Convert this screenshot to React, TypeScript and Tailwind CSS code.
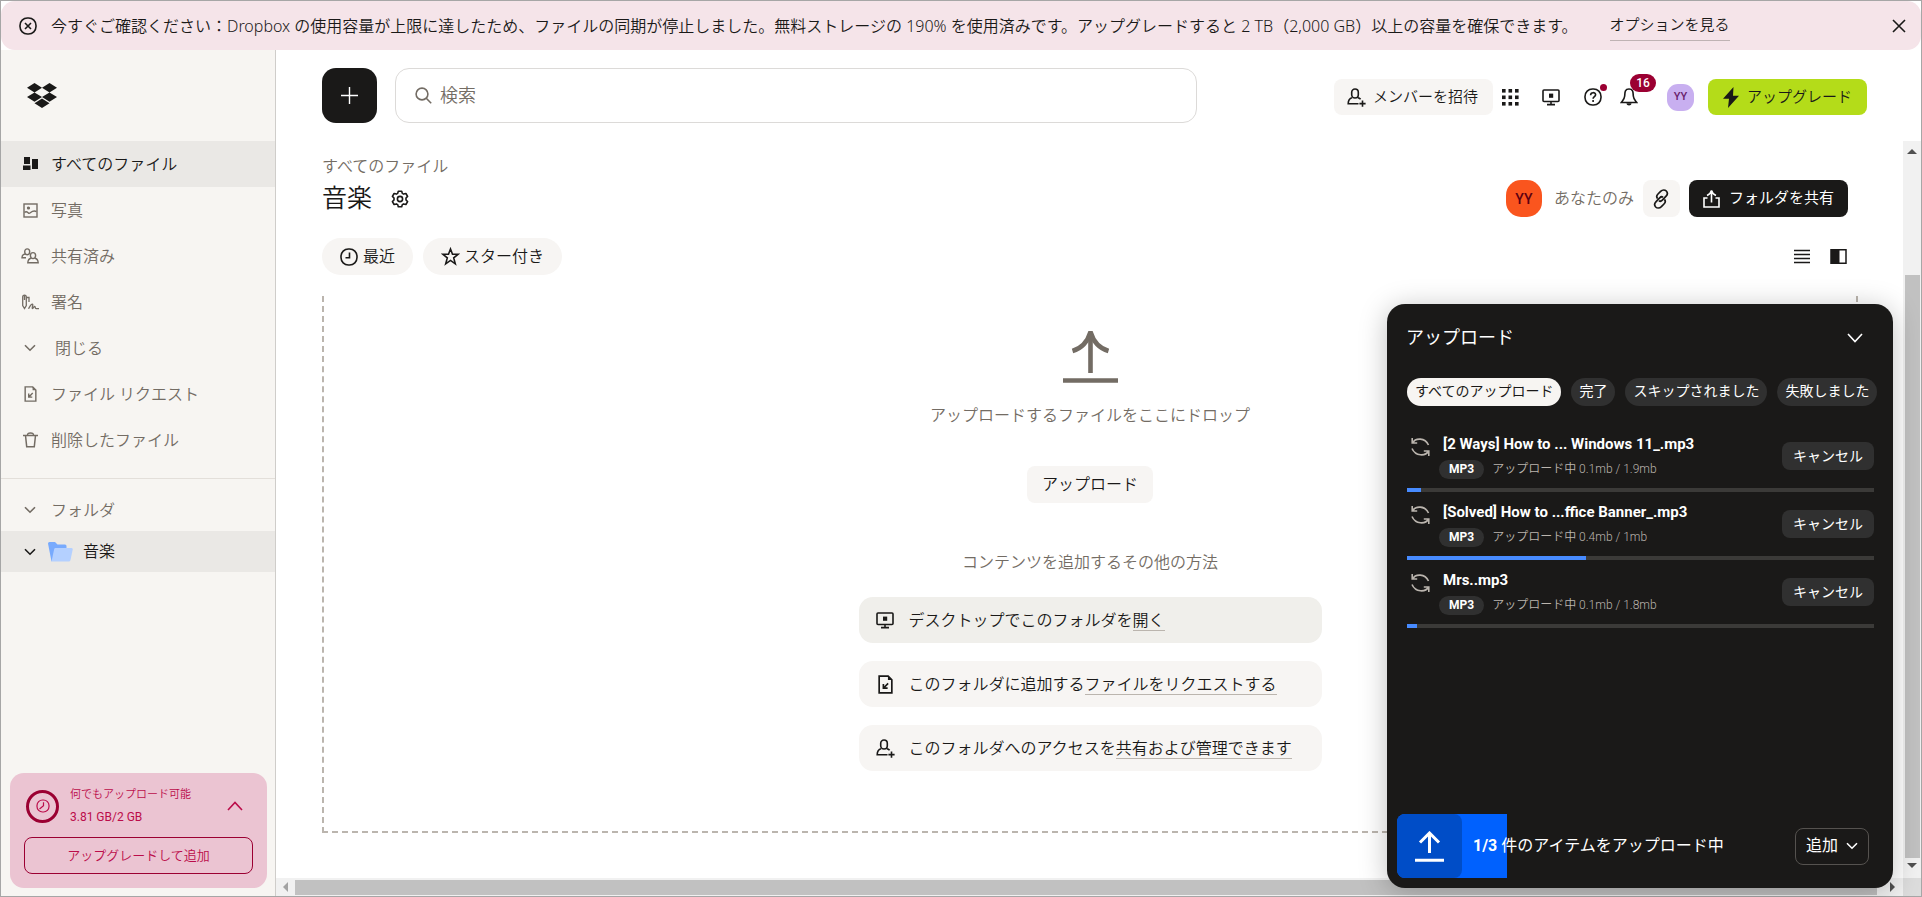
import React, { type ReactNode } from 'react';

type IconProps = { className?: string };

function Svg({ className = '', box, width = 1.6, children }: IconProps & { box: string; width?: number; children: ReactNode }) {
  return (
    <svg viewBox={box} className={`shrink-0 ${className}`} fill="none" stroke="currentColor" strokeWidth={width} aria-hidden="true">
      {children}
    </svg>
  );
}

const DropboxLogo = () => (
  <svg viewBox="0 0 30 25" className="h-[25px] w-[30px]" fill="currentColor" aria-hidden="true">
    <path d="M7.5 0 15 4.7 7.5 9.4 0 4.7ZM22.5 0 30 4.7 22.5 9.4 15 4.7ZM7.5 9.4 15 14.1 7.5 18.8 0 14.1ZM22.5 9.4 30 14.1 22.5 18.8 15 14.1ZM15 15.6 22.5 20.3 15 25 7.5 20.3Z" />
  </svg>
);

const CircleX = ({ className }: IconProps) => (
  <Svg box="0 0 18 18" className={className}>
    <rect x="1" y="1" width="16" height="16" rx="7.4" />
    <path d="m6 6 6 6M12 6l-6 6" />
  </Svg>
);
const Close = ({ className }: IconProps) => (
  <Svg box="0 0 14 14" className={className}>
    <path d="m1 1 12 12M13 1 1 13" />
  </Svg>
);
const Chevron = ({ className }: IconProps) => (
  <Svg box="0 0 12 8" className={className}>
    <path d="m1 1.2 5 5 5-5" />
  </Svg>
);
const AllFiles = ({ className }: IconProps) => (
  <svg viewBox="0 0 15 14" className={`shrink-0 ${className}`} fill="currentColor" aria-hidden="true">
    <path d="M1 0h6v7H1zM0 8.5h7.5V13H0zM9 2h6v10H9z" />
  </svg>
);
const Photo = ({ className }: IconProps) => (
  <Svg box="0 0 15 15" width={1.4} className={className}>
    <rect x="1" y="1" width="13" height="13" />
    <path d="M1.5 9.5c2-2 3-.2 4.2.8C7.5 11 8.5 6.5 13.5 8.5" />
    <circle cx="5.5" cy="5" r=".9" fill="currentColor" />
  </Svg>
);
const Shared = ({ className }: IconProps) => (
  <Svg box="0 0 18 16" width={1.4} className={className}>
    <ellipse cx="6.2" cy="3.8" rx="2.5" ry="2.9" />
    <path d="M5 9.8H1c0-2.5 1-3.7 3.5-3.8" />
    <ellipse cx="12" cy="7.6" rx="2.6" ry="3" />
    <path d="M10 10.2c-2 .3-3 1.800-3.200 4.600h10.400c-.2-2.800-1.200-4.300-3.200-4.600" />
  </Svg>
);
const Signature = ({ className }: IconProps) => (
  <Svg box="0 0 18 16" width={1.3} className={className}>
    <path d="M1.7 3c0-2.6 3.6-2.6 3.6 0v8.5l-1.8 3-1.8-3zM3.5 1v5M5.5 3.5H8v4.500" />
    <path d="M7.500 14.800c1-1.800 2.500-4.800 4-4.600 1 .2-1 4.300 0 4.400 1 0 1.200-2.300 2.200-2.200 1 .1 0 2.200 1.400 2.200H18" />
  </Svg>
);
const FileRequest = ({ className }: IconProps) => (
  <Svg box="0 0 14 18" className={className}>
    <path d="M1 1h8.5L13 4.5V17H1z" />
    <path d="M9.300.8v4h3.900z" fill="currentColor" stroke="none" />
    <path d="m9.500 8-4.300 4.300M5 8.500v4h4" />
  </Svg>
);
const Trash = ({ className }: IconProps) => (
  <Svg box="0 0 15 16" width={1.5} className={className}>
    <path d="M0 3.5h15M4.500 3.500C4.500 1.500 5 1 7.500 1s3 .5 3 2.500M2.500 3.500l1.200 11.200h7.600l1.200-11.200" />
  </Svg>
);
const Folder = () => (
  <svg viewBox="0 0 25 20" className="h-5 w-[25px] shrink-0" aria-hidden="true">
    <path d="M0 1.500Q0 0 1.500 0H7l2.500 2.500H17q1.500 0 1.500 1.500v4L3.500 19.500z" fill="#78aafd" />
    <path d="M7.500 6h16q1.500 0 1.200 1.500L22.500 18q-.4 1.500-1.800 1.500H3.500L6.200 7q.3-1 1.300-1z" fill="#b4d0ff" />
  </svg>
);
const Search = ({ className }: IconProps) => (
  <Svg box="0 0 17 17" className={className}>
    <circle cx="7" cy="7" r="5.9" />
    <path d="m11 11 5.200 5.200" />
  </Svg>
);
const PersonAdd = ({ className }: IconProps) => (
  <Svg box="0 0 19 19" className={className}>
    <path d="M11.500 15.700H1.200c0-3.400 1-5.200 4-5.900M10.800 9.800c1.200.2 2.200.8 2.800 1.500" />
    <rect x="4.700" y="1" width="6.600" height="9" rx="3.300" />
    <path d="M15.500 12.500v6.200M12.400 15.600h6.200" />
  </Svg>
);
const Grid = ({ className }: IconProps) => (
  <svg viewBox="0 0 17 17" className={`shrink-0 ${className}`} fill="currentColor" aria-hidden="true">
    {[0, 6.5, 13].map((y) => [0, 6.5, 13].map((x) => <rect key={`${x}-${y}`} x={x} y={y} width="3.6" height="3.6" />))}
  </svg>
);
const Monitor = ({ className }: IconProps) => (
  <Svg box="0 0 18 17" className={className}>
    <rect x="1" y="1" width="16" height="11.5" rx="1" />
    <path d="M9 12.500v3M5 15.600h8" />
    <rect x="7" y="4.600" width="4.200" height="4.200" fill="currentColor" stroke="none" />
  </Svg>
);
const Help = ({ className }: IconProps) => (
  <Svg box="0 0 18 18" className={className}>
    <rect x="1" y="1" width="16" height="16" rx="7.4" />
    <path d="M6.600 7.200c0-3.400 5-3.200 5-.4 0 1.800-2.500 1.900-2.500 4" />
    <path d="M9.100 12v1.900" />
  </Svg>
);
const Bell = ({ className }: IconProps) => (
  <Svg box="0 0 18 18" className={className}>
    <path d="M9 1C4.800 1 4.900 4.500 4.700 8c-.2 3-1.900 4.500-3.400 6.500h15.400c-1.500-2-3.200-3.500-3.400-6.500C13.100 4.500 13.200 1 9 1z" />
    <path d="M6.500 15.200h5c-.2 3-4.800 3-5 0z" fill="currentColor" stroke="none" />
  </Svg>
);
const Bolt = ({ className }: IconProps) => (
  <svg viewBox="0 0 16 21" className={`shrink-0 ${className}`} fill="currentColor" aria-hidden="true">
    <path d="M10.500 0 0 11.800h6L5 21l11-12.300h-6z" />
  </svg>
);
const Gear = ({ className }: IconProps) => (
  <Svg box="0 0 18 18" className={className}>
    <path d="M7.300 1.200h3.400l.6 2.200 1.300.7 2.300-.6 1.700 2.900-1.600 1.600v2l1.600 1.600-1.700 2.900-2.300-.6-1.300.7-.6 2.200H7.300l-.6-2.200-1.300-.7-2.300.6-1.700-2.900L3 10V8L1.400 6.400l1.700-2.900 2.300.6 1.300-.7z" strokeLinejoin="round" />
    <circle cx="9" cy="9" r="2.6" />
  </Svg>
);
const Clock = ({ className }: IconProps) => (
  <Svg box="0 0 18 18" className={className}>
    <rect x="1" y="1" width="16" height="16" rx="7.4" />
    <path d="M9.500 4.500v5.200h-4" />
  </Svg>
);
const Star = ({ className }: IconProps) => (
  <Svg box="0 0 19 19" className={className}>
    <path d="m9.500 2 2 5.300h5.600l-4.400 3.600 1.600 5.900-4.800-3.400-4.800 3.400 1.600-5.900-4.400-3.600h5.600z" />
  </Svg>
);
const LinkIcon = ({ className }: IconProps) => (
  <Svg box="0 0 16 20" width={1.7} className={className}>
    <path d="M4.600 9.600C3.200 8 3.600 6.400 5 5l2.600-2.700C9.500.5 12 .7 13.300 2c1.400 1.500 1.300 3.500-.2 5.100L9.300 11.200c-1.200 1.200-2.500 1.200-3.300.4" />
    <path d="M11.400 10.400c1.400 1.600 1 3.200-.4 4.600l-2.600 2.700c-1.900 1.800-4.400 1.600-5.700.3-1.400-1.500-1.300-3.500.2-5.100L6.700 8.800c1.200-1.200 2.500-1.200 3.300-.4" />
  </Svg>
);
const Share = ({ className }: IconProps) => (
  <Svg box="0 0 17 19" className={className}>
    <path d="M4.500 9H1v9h15V9h-3.500M8.500 13.500V2M4 6.500c2.500-1 4-3 4.500-5 .5 2 2 4 4.500 5" />
  </Svg>
);
const ListIcon = ({ className }: IconProps) => (
  <Svg box="0 0 16 16" className={className}>
    <path d="M0 1.500h16M0 5.500h16M0 9.500h16M0 13.500h16" />
  </Svg>
);
const PanelIcon = ({ className }: IconProps) => (
  <svg viewBox="0 0 17 17" className={`shrink-0 ${className}`} aria-hidden="true">
    <path d="M1 1.700h15v13.600H1z" fill="none" stroke="currentColor" strokeWidth="1.5" />
    <path d="M1 1h8.500v15H1z" fill="currentColor" />
  </svg>
);
const UploadLarge = () => (
  <Svg box="0 0 55 52" width={4.6} className="h-[52px] w-[55px] text-[#736c64]">
    <path d="M27.500 1v41M0 49.500h55" />
    <path d="M9.500 20C18 17.500 24.500 11 27.500 1c3 10 9.500 16.500 18 19" />
  </Svg>
);
const UploadSmall = () => (
  <Svg box="0 0 29 31" width={3} className="h-[31px] w-[29px] text-white">
    <path d="M14.500 2v20M0 29.200h29M5 11.500l9.500-9.500 9.500 9.500" />
  </Svg>
);
const Sync = ({ className }: IconProps) => (
  <Svg box="0 0 19 20" className={className}>
    <path d="M1.200 1v5h5M1.500 6C4.500.5 14 .5 17.500 8M17.800 19v-5h-5M17.500 14C14.500 19.500 4.500 19.500 1 11.500" />
  </Svg>
);

const navItems = [
  { label: 'すべてのファイル', icon: <AllFiles className="h-[14px] w-[15px]" />, active: true },
  { label: '写真', icon: <Photo className="h-[15px] w-[15px]" /> },
  { label: '共有済み', icon: <Shared className="h-4 w-[18px]" /> },
  { label: '署名', icon: <Signature className="h-4 w-[18px]" /> },
  { label: '閉じる', icon: <Chevron className="h-2 w-3" />, indent: true },
  { label: 'ファイル リクエスト', icon: <FileRequest className="h-4 w-[13px]" /> },
  { label: '削除したファイル', icon: <Trash className="h-4 w-[15px]" /> },
];

function Sidebar() {
  return (
    <aside className="flex w-[275px] shrink-0 flex-col border-r border-[#cfcdca] bg-[#f7f5f2]">
      <a href="#home" aria-label="Dropbox" className="flex h-[91px] shrink-0 items-center px-[26px]">
        <DropboxLogo />
      </a>
      <nav>
        {navItems.map((item) => (
          <a
            key={item.label}
            href="#nav"
            className={`flex h-[46px] items-center ${item.active ? 'bg-[#eae8e5] text-[#1a1918]' : 'text-[#736c64]'}`}
          >
            <span className="ml-5 flex w-[18px] justify-center">{item.icon}</span>
            <span className={item.indent ? 'ml-4 pt-0.5' : 'ml-3 pt-0.5'}>{item.label}</span>
          </a>
        ))}
      </nav>
      <hr className="mt-[15px] border-t border-[#e3dfda]" />
      <button type="button" className="mt-[10px] flex h-[42px] items-center text-left text-[#736c64]">
        <span className="ml-5 flex w-[18px] justify-center"><Chevron className="h-2 w-3" /></span>
        <span className="ml-3 pt-0.5">フォルダ</span>
      </button>
      <a href="#music" className="flex h-[41px] items-center bg-[#eae8e5] text-[#1a1918]">
        <span className="ml-5 flex w-[18px] justify-center"><Chevron className="h-2 w-3" /></span>
        <span className="mr-[10px] ml-[9px]"><Folder /></span>
        音楽
      </a>
      <section className="mt-auto mr-2 mb-2 ml-[9px] rounded-[14px] bg-[#ebc4d2] px-[14px] pt-[11px] pb-[14px] text-[#bb0c4a]">
        <div className="flex items-center">
          <span className="ml-0.5 flex h-[33px] w-[33px] items-center justify-center rounded-full border-[3px] border-[#9b0032]">
            <Svg box="0 0 14 14" width={1.2} className="h-[14px] w-[14px]">
              <rect x="1" y="1" width="12" height="12" rx="5.5" />
              <path d="M7.500 3.200v3.600L3.500 10" />
            </Svg>
          </span>
          <div className="ml-[11px] flex-1">
            <div className="text-[11px] leading-[22px]">何でもアップロード可能</div>
            <div className="text-xs leading-[22px] font-normal">3.81 GB/2 GB</div>
          </div>
          <button type="button" aria-label="閉じる" className="mr-[10px]">
            <Svg box="0 0 16 10" className="h-[10px] w-4"><path d="m1 9 7-7.500L15 9" /></Svg>
          </button>
        </div>
        <button type="button" className="mt-[9px] h-[37px] w-full rounded-lg border border-[#9b0032] text-[13px]">
          アップグレードして追加
        </button>
      </section>
    </aside>
  );
}

function Header() {
  return (
    <header className="flex h-[91px] shrink-0 items-center pr-[54px] pl-[46px]">
      <button type="button" aria-label="作成" className="flex h-[55px] w-[55px] shrink-0 items-center justify-center rounded-[14px] bg-[#1a1918] text-white">
        <Svg box="0 0 17 17" width={1.4} className="h-[17px] w-[17px]"><path d="M8.500 0v17M0 8.500h17" /></Svg>
      </button>
      <label className="ml-[18px] flex h-[55px] max-w-[802px] flex-1 items-center rounded-[14px] border border-[#dcdad8] px-[19px] text-[#736c64]">
        <Search className="h-[17px] w-[17px]" />
        <input type="text" aria-label="検索" placeholder="検索" className="ml-2 w-full text-lg outline-none placeholder:text-[#736c64]" />
      </label>
      <div className="mt-[3px] ml-auto flex items-center text-[#1a1918]">
        <button type="button" className="flex h-9 w-[159px] items-center rounded-lg bg-[#f7f5f3] pl-[13px] text-[15px]">
          <PersonAdd className="mr-[7px] h-[19px] w-[19px]" />
          メンバーを招待
        </button>
        <button type="button" aria-label="アプリ" className="ml-[9px]"><Grid className="h-[17px] w-[17px]" /></button>
        <button type="button" aria-label="デスクトップ" className="ml-[23px]"><Monitor className="h-[17px] w-[18px]" /></button>
        <button type="button" aria-label="ヘルプ" className="relative ml-6">
          <Help className="h-[18px] w-[18px]" />
          <span className="absolute -top-1 -right-[5px] h-[7px] w-[7px] rounded-full bg-[#9b0032]" />
        </button>
        <button type="button" aria-label="通知" className="relative ml-[18px]">
          <Bell className="h-[18px] w-[18px]" />
          <span className="absolute -top-[14px] left-[10px] flex h-[18px] w-[26px] items-center justify-center rounded-full bg-[#9b0032] text-xs font-medium text-white">16</span>
        </button>
        <button type="button" className="ml-[29px] flex h-[27px] w-[27px] items-center justify-center rounded-[11px] bg-[#c8aff0] text-[11px] font-medium text-[#69206b]">YY</button>
        <button type="button" className="ml-[14px] flex h-9 items-center rounded-lg bg-[#b4dc19] px-[15px] text-[15px]">
          <Bolt className="mr-2 h-[21px] w-4" />
          アップグレード
        </button>
      </div>
    </header>
  );
}

const actions = [
  { icon: <Monitor className="h-[17px] w-[18px]" />, text: 'デスクトップでこのフォルダを', link: '開く', tone: 'bg-[#f0efeb]' },
  { icon: <FileRequest className="h-[19px] w-[15px]" />, text: 'このフォルダに追加する', link: 'ファイルをリクエストする', tone: 'bg-[#f7f5f3]' },
  { icon: <PersonAdd className="h-[19px] w-[19px]" />, text: 'このフォルダへのアクセスを', link: '共有および管理できます', tone: 'bg-[#f7f5f3]' },
];

function Content() {
  return (
    <main className="flex min-w-0 flex-1 flex-col pt-[14px] pr-[45px] pb-[45px] pl-[46px] text-[#1a1918]">
      <a href="#all" className="h-6 self-start leading-6 text-[#736c64]">すべてのファイル</a>
      <div className="mt-px flex h-[37px] items-center">
        <h1 className="text-[25px]">音楽</h1>
        <button type="button" aria-label="設定" className="ml-[19px]"><Gear className="h-[18px] w-[18px]" /></button>
        <div className="mr-[10px] ml-auto flex items-center">
          <span className="flex h-[37px] w-9 items-center justify-center rounded-[15px] bg-[#fa551e] text-sm font-medium text-[#5c0012]">YY</span>
          <span className="mr-[9px] ml-3 text-[#736c64]">あなたのみ</span>
          <button type="button" aria-label="リンクをコピー" className="flex h-[37px] w-[37px] items-center justify-center rounded-lg bg-[#f7f5f3]"><LinkIcon className="h-5 w-4" /></button>
          <button type="button" className="ml-[9px] flex h-[37px] items-center rounded-lg bg-[#1a1918] px-[14px] text-[15px] font-normal text-white">
            <Share className="mr-[9px] h-[19px] w-[17px]" />
            フォルダを共有
          </button>
        </div>
      </div>
      <div className="mt-[21px] flex items-center">
        <button type="button" className="flex h-[37px] items-center gap-[5px] rounded-full bg-[#f7f5f3] px-[18px]"><Clock className="h-[18px] w-[18px]" />最近</button>
        <button type="button" className="ml-[10px] flex h-[37px] items-center gap-1 rounded-full bg-[#f7f5f3] px-[18px]"><Star className="h-[19px] w-[19px]" />スター付き</button>
        <button type="button" aria-label="リスト表示" className="ml-auto"><ListIcon className="h-4 w-4" /></button>
        <button type="button" aria-label="詳細パネル" className="mr-[11px] ml-5"><PanelIcon className="h-[17px] w-[17px]" /></button>
      </div>
      <section className="mt-[21px] flex flex-1 flex-col items-center border-2 border-t-0 border-dashed border-[#bbb5ae] pt-[35px]">
        <UploadLarge />
        <p className="mt-[21px] text-[#736c64]">アップロードするファイルをここにドロップ</p>
        <button type="button" className="mt-[38px] h-[37px] rounded-lg bg-[#f7f5f3] px-[15px]">アップロード</button>
        <p className="mt-12 text-[#736c64]">コンテンツを追加するその他の方法</p>
        <ul className="mt-[22px] flex w-[463px] flex-col gap-[18px]">
          {actions.map((a) => (
            <li key={a.link} className={`flex h-[46px] items-center rounded-[14px] pl-[17px] ${a.tone}`}>
              <span className="mr-[14px] flex w-[19px] justify-center">{a.icon}</span>
              <span className="pt-px">
                {a.text}
                <a href="#action" className="border-b border-[#bbb5ae]">{a.link}</a>
              </span>
            </li>
          ))}
        </ul>
      </section>
    </main>
  );
}

const arrow = 'h-0 w-0 shrink-0 border-transparent';

function VerticalScrollbar() {
  return (
    <div className="flex w-[18px] shrink-0 flex-col items-center bg-[#f1f1f1]" aria-hidden="true">
      <div className={`${arrow} mt-2 border-x-[5px] border-b-[5px] border-b-[#505050]`} />
      <div className="mt-[121px] mb-[5px] w-[15px] flex-1 bg-[#c1c1c1]" />
      <div className={`${arrow} mb-[10px] border-x-[5px] border-t-[5px] border-t-[#505050]`} />
    </div>
  );
}

function HorizontalScrollbar() {
  return (
    <div className="flex h-[18px] shrink-0 items-center bg-[#f1f1f1]" aria-hidden="true">
      <div className={`${arrow} ml-[7px] border-y-[5px] border-r-[5px] border-r-[#a3a3a3]`} />
      <div className="mr-[13px] ml-[7px] h-[15px] flex-1 bg-[#c1c1c1]" />
      <div className={`${arrow} border-y-[5px] border-l-[5px] border-l-[#505050]`} />
      <div className="ml-2 h-[18px] w-[18px] bg-[#dcdcdc]" />
    </div>
  );
}

const filters = ['すべてのアップロード', '完了', 'スキップされました', '失敗しました'];
const uploads = [
  { name: '[2 Ways] How to ... Windows 11_.mp3', size: '0.1mb / 1.9mb', progress: 3 },
  { name: '[Solved] How to ...ffice Banner_.mp3', size: '0.4mb / 1mb', progress: 38.3 },
  { name: 'Mrs..mp3', size: '0.1mb / 1.8mb', progress: 2.2 },
];

function UploadPanel() {
  return (
    <section className="absolute right-7 bottom-2 flex h-[584px] w-[506px] flex-col rounded-[18px] bg-[#1a1918] font-normal text-white shadow-[0_4px_28px_rgba(0,0,0,0.25)]">
      <div className="flex items-center pt-5 pr-[30px] pl-[19px]">
        <h2 className="text-lg leading-7">アップロード</h2>
        <button type="button" aria-label="最小化" className="ml-auto"><Svg box="0 0 16 10" className="h-[10px] w-4"><path d="m1 1 7 7.500L15 1" /></Svg></button>
      </div>
      <div className="mt-[26px] flex gap-[10px] pl-5 text-sm">
        {filters.map((f, i) => (
          <button key={f} type="button" className={`h-7 rounded-full px-2 pb-0.5 whitespace-nowrap ${i === 0 ? 'bg-[#f7f5f2] text-[#1a1918]' : 'bg-[#303030] text-white'}`}>
            {f}
          </button>
        ))}
      </div>
      <ul className="mt-[26px] pr-[19px] pl-5">
        {uploads.map((u) => (
          <li key={u.name} className="flex h-[68px] flex-col">
            <div className="flex">
              <Sync className="mt-[5px] ml-1 h-5 w-[19px] text-[#bbb5ae]" />
              <div className="ml-[9px] flex-1">
                <div className="ml-1 h-[25px] text-[15px] leading-6 font-bold">{u.name}</div>
                <div className="flex items-center text-[#bbb5ae]">
                  <span className="h-[19px] rounded-full bg-[#303030] px-[10px] text-xs leading-[18px] font-bold text-white">MP3</span>
                  <span className="ml-2 text-xs leading-6 font-[350]">アップロード中 {u.size}</span>
                </div>
              </div>
              <button type="button" className="mt-[10px] h-7 rounded-lg bg-[#303030] px-[11px] text-sm">キャンセル</button>
            </div>
            <div className="mt-auto mb-2 h-1 bg-[#3b3a38]" role="progressbar" aria-valuenow={u.progress}>
              <div className="h-full bg-[#478bff]" style={{ width: `${u.progress}%` }} />
            </div>
          </li>
        ))}
      </ul>
      <footer className="mt-auto mb-[10px] flex items-center pr-6 pl-[10px]">
        <div className="flex h-16 w-[110px] items-center rounded-l-lg bg-[#0061fe]">
          <div className="flex h-16 w-[65px] items-center justify-center rounded-lg bg-[#004dc7]"><UploadSmall /></div>
        </div>
        <p className="-ml-[34px] flex-1"><b className="font-bold">1/3</b> 件のアイテムをアップロード中</p>
        <button type="button" className="flex h-[37px] items-center rounded-lg border border-[#55524f] px-[10px]">
          追加
          <Chevron className="ml-2 h-2 w-3" />
        </button>
      </footer>
    </section>
  );
}

export default function App() {
  return (
    <div className="relative flex h-screen min-h-[760px] flex-col border border-[#a6a6a6] bg-white font-['Roboto','Noto_Sans_CJK_JP',sans-serif] text-base font-[350] text-[#1a1918]">
      <div className="flex h-[49px] shrink-0 items-center rounded-[14px] bg-[#f5e4e9] pr-[15px] pl-[18px]">
        <CircleX className="h-[18px] w-[18px]" />
        <p className="ml-[14px] font-['Noto_Sans','Noto_Sans_CJK_JP',sans-serif]">
          今すぐご確認ください：Dropbox の使用容量が上限に達したため、ファイルの同期が停止しました。無料ストレージの 190% を使用済みです。アップグレードすると 2 TB（2,000 GB）以上の容量を確保できます。
        </p>
        <a href="#options" className="ml-8 border-b border-[#bfb3b3] pt-1 pb-[3px] text-[15px]">オプションを見る</a>
        <button type="button" aria-label="閉じる" className="ml-auto"><Close className="h-[14px] w-[14px]" /></button>
      </div>
      <div className="flex min-h-0 flex-1">
        <Sidebar />
        <div className="flex min-w-0 flex-1 flex-col">
          <Header />
          <div className="flex min-h-0 flex-1">
            <Content />
            <VerticalScrollbar />
          </div>
          <HorizontalScrollbar />
        </div>
      </div>
      <UploadPanel />
    </div>
  );
}
